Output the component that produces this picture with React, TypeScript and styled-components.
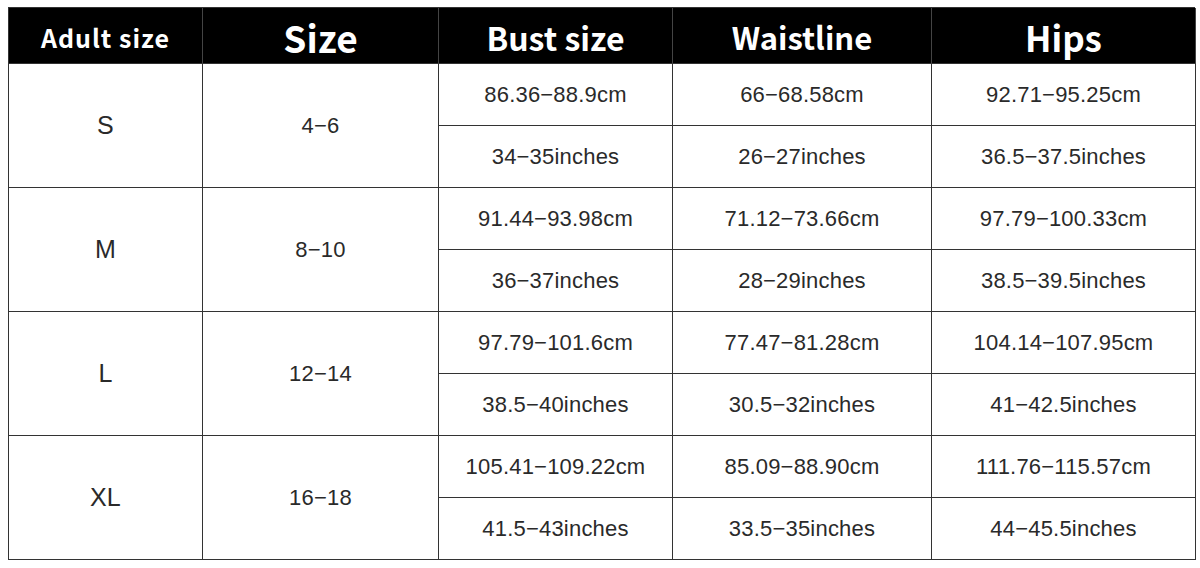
import { Fragment } from 'react';
import styled, { createGlobalStyle } from 'styled-components';

const GlobalStyle = createGlobalStyle`
  body {
    margin: 0;
    padding: 7px 5px 0 8px;
    background: #ffffff;
    font-family: 'Liberation Sans', Arial, sans-serif;
    color: #2a2a2a;
  }
`;

const Table = styled.div`
  display: grid;
  width: 1187px;
  grid-template-columns: 194px 236px 234px 259px 264px;
  grid-template-rows: 56px repeat(8, 62px);
  border-left: 1.5px solid #333;
  border-top: 1.5px solid #333;
  box-sizing: border-box;
`;

const Head = styled.div<{ $size: number; $spacing?: number }>`
  background: #000;
  color: #fff;
  display: flex;
  align-items: center;
  justify-content: center;
  font-family: 'Noto Sans CJK SC', 'Open Sans', sans-serif;
  font-weight: 700;
  font-size: ${(p) => p.$size}px;
  letter-spacing: ${(p) => p.$spacing ?? 0}px;
  border-right: 1.5px solid #444;
  border-bottom: 1.5px solid #333;
  padding-top: 2px;
`;

const Cell = styled.div<{ $span?: number; $size?: number }>`
  grid-row: span ${(p) => p.$span ?? 1};
  display: flex;
  align-items: center;
  justify-content: center;
  font-size: ${(p) => p.$size ?? 22}px;
  letter-spacing: 0.2px;
  border-right: 1.5px solid #333;
  border-bottom: 1.5px solid #333;
`;

const heads: [string, number, number][] = [
  ['Adult size', 25, 1],
  ['Size', 37, 0],
  ['Bust size', 32, 0],
  ['Waistline', 31, 0],
  ['Hips', 35, 0],
];

const rows = [
  {
    label: 'S',
    size: '4−6',
    vals: [
      ['86.36−88.9cm', '66−68.58cm', '92.71−95.25cm'],
      ['34−35inches', '26−27inches', '36.5−37.5inches'],
    ],
  },
  {
    label: 'M',
    size: '8−10',
    vals: [
      ['91.44−93.98cm', '71.12−73.66cm', '97.79−100.33cm'],
      ['36−37inches', '28−29inches', '38.5−39.5inches'],
    ],
  },
  {
    label: 'L',
    size: '12−14',
    vals: [
      ['97.79−101.6cm', '77.47−81.28cm', '104.14−107.95cm'],
      ['38.5−40inches', '30.5−32inches', '41−42.5inches'],
    ],
  },
  {
    label: 'XL',
    size: '16−18',
    vals: [
      ['105.41−109.22cm', '85.09−88.90cm', '111.76−115.57cm'],
      ['41.5−43inches', '33.5−35inches', '44−45.5inches'],
    ],
  },
];

const App = () => {
  return (
    <>
      <GlobalStyle />
      <Table>
        {heads.map(([h, s, ls]) => (
          <Head key={h} $size={s} $spacing={ls}>
            {h}
          </Head>
        ))}
        {rows.map((r) => (
          <Fragment key={r.label}>
            <Cell $span={2} $size={25}>
              {r.label}
            </Cell>
            <Cell $span={2} $size={22}>
              {r.size}
            </Cell>
            {r.vals[0].map((v) => (
              <Cell key={v}>{v}</Cell>
            ))}
            {r.vals[1].map((v) => (
              <Cell key={v}>{v}</Cell>
            ))}
          </Fragment>
        ))}
      </Table>
    </>
  );
};

export default App;
